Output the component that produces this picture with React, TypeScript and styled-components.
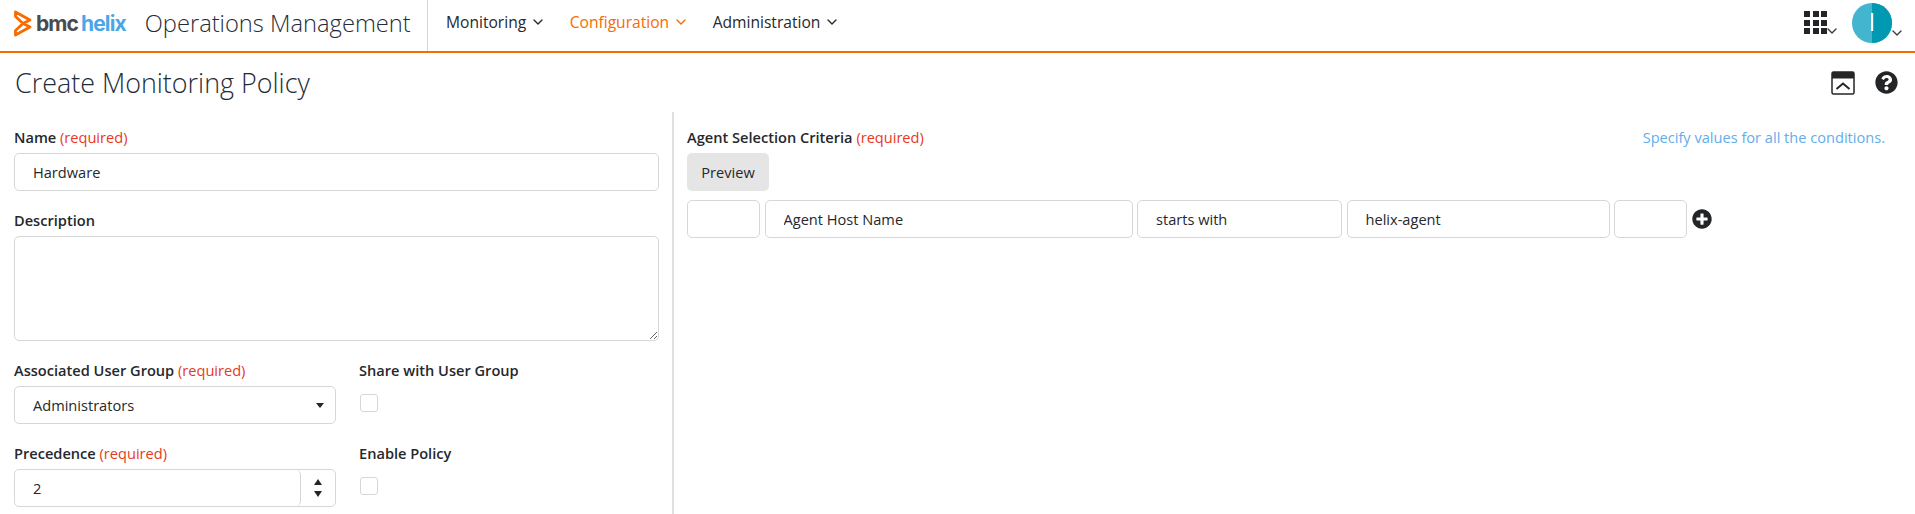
import { ChevronDown } from "lucide-react";
import { FaPlusCircle, FaQuestionCircle } from "react-icons/fa";
import styled, { createGlobalStyle } from "styled-components";

const GlobalStyle = createGlobalStyle`
  html, body {
    margin: 0;
    padding: 0;
    background: #fff;
    color: #25282c;
    font-family: "Open Sans", "Liberation Sans", sans-serif;
    font-size: 14.6px;
  }
  * { box-sizing: border-box; }
`;

const Header = styled.header`
  display: flex;
  align-items: stretch;
  height: 53px;
  border-bottom: 2px solid #f76b00;
  padding-left: 14px;
`;

const Brand = styled.div`
  display: flex;
  align-items: center;
  width: 414px;
  padding-bottom: 5px;
  border-right: 1px solid #d6d7d8;
`;

const Mark = styled.svg`
  width: 18px;
  height: 27px;
  margin-right: 4px;
`;

const LogoWord = styled.span<{ $blue?: boolean }>`
  font-family: "Inter", "Liberation Sans", sans-serif;
  font-size: 21px;
  font-weight: 700;
  letter-spacing: -0.9px;
  color: ${(p) => (p.$blue ? "#4ba6e8" : "#4a4b4d")};
  margin-right: ${(p) => (p.$blue ? "19px" : "3px")};
`;

const ProductName = styled.span`
  font-size: 23.7px;
  font-weight: 300;
  color: #1f2c3a;
  white-space: nowrap;
`;

const Nav = styled.nav`
  display: flex;
  align-items: center;
  gap: 23.5px;
  padding: 0 0 7px 18px;
  flex: 1;
`;

const NavItem = styled.a<{ $active?: boolean }>`
  display: flex;
  align-items: center;
  gap: 4px;
  font-size: 15.6px;
  color: ${(p) => (p.$active ? "#f76b00" : "#25282c")};
`;

const HeaderTools = styled.div`
  display: flex;
  align-items: flex-start;
  padding-right: 10px;
`;

const AppsGrid = styled.div`
  display: grid;
  grid-template-columns: repeat(3, 6px);
  grid-auto-rows: 6px;
  gap: 2.5px;
  margin-top: 11px;
`;

const AppsCell = styled.span`
  background: #242527;
`;

const ToolCaret = styled(ChevronDown)<{ $top: number; $left: number }>`
  margin-top: ${(p) => p.$top}px;
  margin-left: ${(p) => p.$left}px;
  color: #3a3c40;
`;

const Avatar = styled.svg`
  width: 40px;
  height: 40px;
  margin: 3px 0 0 12px;
`;

const TitleRow = styled.div`
  display: flex;
  align-items: center;
  justify-content: space-between;
  height: 59px;
  padding: 0 17px 0 15px;
`;

const Title = styled.h1`
  margin: 0;
  font-size: 26.9px;
  font-weight: 300;
  color: #1f2c3a;
`;

const PageTools = styled.div`
  display: flex;
  align-items: center;
  gap: 20px;
  color: #242527;
`;

const Body = styled.main`
  display: grid;
  grid-template-columns: 674px 1fr;
  min-height: 402px;
`;

const LeftPane = styled.section`
  display: flex;
  flex-direction: column;
  gap: 20px;
  padding: 16px 13px 0 14px;
  border-right: 2px solid #e0e0e0;
`;

const RightPane = styled.section`
  display: flex;
  flex-direction: column;
  padding: 16px 30px 0 13px;
`;

const Field = styled.div`
  display: flex;
  flex-direction: column;
  gap: 6px;
`;

const FieldRow = styled.div`
  display: grid;
  grid-template-columns: 322px 1fr;
  gap: 23px;
`;

const Label = styled.label`
  font-size: 14.6px;
  font-weight: 600;
  line-height: 19px;
  color: #25282c;
`;

const Required = styled.span`
  font-weight: 400;
  color: #e8391d;
`;

const TextInput = styled.input`
  width: 100%;
  height: 38px;
  padding: 0 18px;
  border: 1px solid #d6d7d8;
  border-radius: 5px;
  background: #fff;
  color: #25282c;
  font: 400 14.6px "Open Sans", sans-serif;
  outline: none;
`;

const TextArea = styled.textarea`
  display: block;
  width: 100%;
  height: 105px;
  border: 1px solid #d6d7d8;
  border-radius: 5px;
  outline: none;
`;

const SelectWrap = styled.div`
  position: relative;
`;

const Select = styled.select`
  display: block;
  width: 100%;
  height: 38px;
  padding: 0 18px;
  border: 1px solid #d6d7d8;
  border-radius: 5px;
  background: #fff;
  color: #25282c;
  font: 400 14.6px "Open Sans", sans-serif;
  appearance: none;
  outline: none;
`;

const SelectCaret = styled.span`
  position: absolute;
  top: 17px;
  right: 12px;
  border-left: 4px solid transparent;
  border-right: 4px solid transparent;
  border-top: 5px solid #242527;
  pointer-events: none;
`;

const NumberBox = styled.div`
  display: flex;
  height: 38px;
  border: 1px solid #d6d7d8;
  border-radius: 5px;
`;

const NumberInput = styled.input`
  flex: 1;
  min-width: 0;
  padding: 0 18px;
  border: 0;
  border-right: 1px solid #d6d7d8;
  border-radius: 5px;
  color: #25282c;
  font: 400 14.6px "Open Sans", sans-serif;
  outline: none;
`;

const Spinner = styled.div`
  display: flex;
  flex-direction: column;
  align-items: center;
  justify-content: center;
  gap: 6px;
  width: 34px;
`;

const SpinArrow = styled.span<{ $up?: boolean }>`
  border-left: 4px solid transparent;
  border-right: 4px solid transparent;
  ${(p) => (p.$up ? "border-bottom" : "border-top")}: 6px solid #242527;
`;

const Check = styled.input`
  appearance: none;
  width: 18px;
  height: 18px;
  margin: 8px 0 0 1px;
  border: 1px solid #d6d7d8;
  border-radius: 3px;
  background: #fff;
`;

const CriteriaHead = styled.div`
  display: flex;
  justify-content: space-between;
  align-items: center;
  height: 19px;
  margin-bottom: 6px;
`;

const Hint = styled.span`
  font-size: 14.6px;
  line-height: 19px;
  color: #62aeea;
`;

const PreviewButton = styled.button`
  align-self: flex-start;
  width: 82px;
  height: 38px;
  border: 0;
  border-radius: 5px;
  background: #e5e5e5;
  color: #25282c;
  font: 400 14.6px "Open Sans", sans-serif;
`;

const ConditionRow = styled.div`
  display: grid;
  grid-template-columns: 73px 368px 205px 263px 73px 20px;
  column-gap: 4.5px;
  align-items: center;
  margin-top: 9px;
`;

const AddIcon = styled(FaPlusCircle)`
  color: #242527;
`;

export default function App() {
  return (
    <>
      <GlobalStyle />
      <Header>
        <Brand>
          <Mark viewBox="0 0 18 27" fill="none" stroke="#f76b00" strokeWidth="2.8" strokeLinejoin="round">
            <path d="M1.5 2 L16 10 L9 13.5 L16 17 L1.5 25 L1.5 20.5 L9 13.5 L1.5 6.5 Z" />
          </Mark>
          <LogoWord>bmc</LogoWord>
          <LogoWord $blue>helix</LogoWord>
          <ProductName>Operations Management</ProductName>
        </Brand>
        <Nav>
          <NavItem>
            Monitoring <ChevronDown size={16} strokeWidth={2} />
          </NavItem>
          <NavItem $active>
            Configuration <ChevronDown size={16} strokeWidth={2} />
          </NavItem>
          <NavItem>
            Administration <ChevronDown size={16} strokeWidth={2} />
          </NavItem>
        </Nav>
        <HeaderTools>
          <AppsGrid>
            {Array.from({ length: 9 }, (_, i) => (
              <AppsCell key={i} />
            ))}
          </AppsGrid>
          <ToolCaret size={16} strokeWidth={2} $top={23} $left={-3} />
          <Avatar viewBox="0 0 40 40">
            <circle cx="20" cy="20" r="20" fill="#43b5cf" />
            <path d="M20 0 A20 20 0 0 1 20 40 Z" fill="#0099b1" />
            <rect x="19" y="10" width="2.2" height="18" fill="#fff" />
          </Avatar>
          <ToolCaret size={16} strokeWidth={2} $top={25} $left={-3} />
        </HeaderTools>
      </Header>
      <TitleRow>
        <Title>Create Monitoring Policy</Title>
        <PageTools>
          <svg width="24" height="24" viewBox="0 0 24 24">
            <rect x="1" y="1" width="22" height="22" rx="1.5" fill="#fff" stroke="#242527" strokeWidth="1.5" />
            <rect x="1" y="1" width="22" height="6.5" fill="#242527" />
            <path d="M5.5 18 L12 12.5 L18.5 18" fill="none" stroke="#242527" strokeWidth="2" />
          </svg>
          <FaQuestionCircle size={23} />
        </PageTools>
      </TitleRow>
      <Body>
        <LeftPane>
          <Field>
            <Label>
              Name <Required>(required)</Required>
            </Label>
            <TextInput defaultValue="Hardware" />
          </Field>
          <Field>
            <Label>Description</Label>
            <TextArea />
          </Field>
          <FieldRow>
            <Field>
              <Label>
                Associated User Group <Required>(required)</Required>
              </Label>
              <SelectWrap>
                <Select defaultValue="Administrators">
                  <option>Administrators</option>
                </Select>
                <SelectCaret />
              </SelectWrap>
            </Field>
            <Field>
              <Label>Share with User Group</Label>
              <Check type="checkbox" />
            </Field>
          </FieldRow>
          <FieldRow>
            <Field>
              <Label>
                Precedence <Required>(required)</Required>
              </Label>
              <NumberBox>
                <NumberInput defaultValue="2" />
                <Spinner>
                  <SpinArrow $up />
                  <SpinArrow />
                </Spinner>
              </NumberBox>
            </Field>
            <Field>
              <Label>Enable Policy</Label>
              <Check type="checkbox" />
            </Field>
          </FieldRow>
        </LeftPane>
        <RightPane>
          <CriteriaHead>
            <Label>
              Agent Selection Criteria <Required>(required)</Required>
            </Label>
            <Hint>Specify values for all the conditions.</Hint>
          </CriteriaHead>
          <PreviewButton>Preview</PreviewButton>
          <ConditionRow>
            <TextInput />
            <TextInput defaultValue="Agent Host Name" />
            <TextInput defaultValue="starts with" />
            <TextInput defaultValue="helix-agent" />
            <TextInput />
            <AddIcon size={20} />
          </ConditionRow>
        </RightPane>
      </Body>
    </>
  );
}
